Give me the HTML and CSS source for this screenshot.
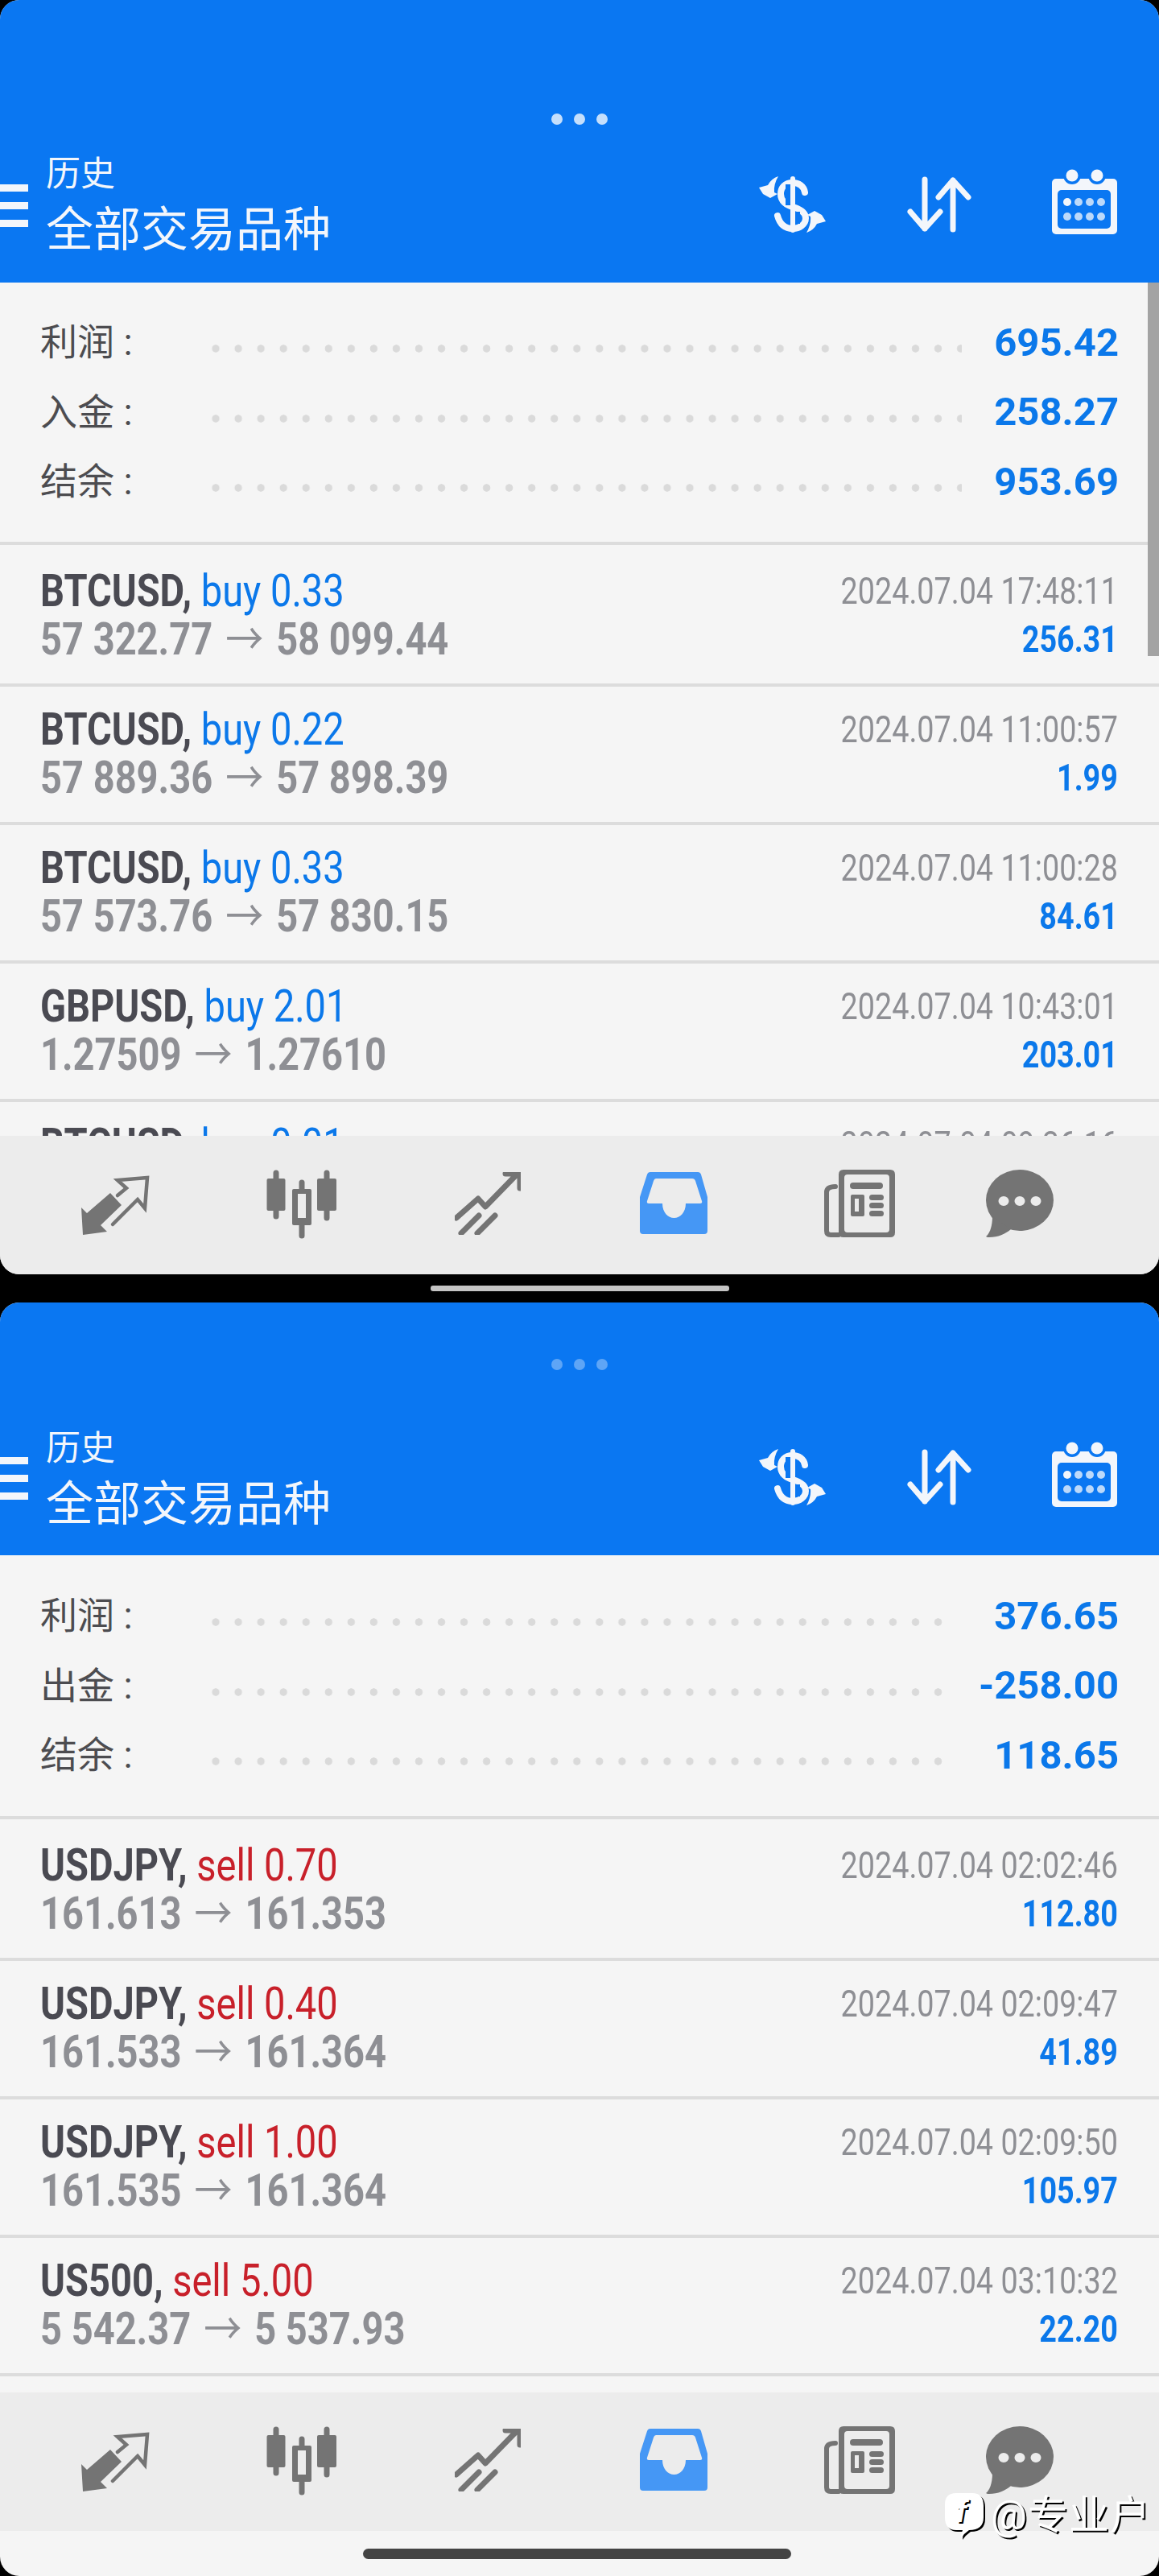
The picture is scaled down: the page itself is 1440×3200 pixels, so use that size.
FILE: index.html
```html
<!DOCTYPE html>
<html lang="zh-CN">
  <head>
    <meta charset="utf-8">
    <meta name="viewport" content="width=device-width">
    <title>历史</title>
    <link rel="stylesheet" href="styles.css">
  </head>

<body>
    <!-- icons used by both panels -->
    <svg class="sprite" aria-hidden="true">
      <symbol id="i-dollar" viewBox="0 0 84 70">
        <path class="w-line fat" d="M57 20C56 12 49 8 42 8 32 8 27 14 27 22 27 31 34 36 42 38 52 41 58 46 58 52 58 60 50 65 42 65 33 65 26 60 23 49"/>
        <rect class="b-fill" x="33" y="10" width="6" height="26"/>
        <rect class="b-fill" x="45" y="44" width="6" height="15"/>
        <rect class="w-fill" x="39" y="0" width="6" height="70" rx="3"/>
        <path class="w-fill" d="M24 0Q15 3 11 11L0 14 5 22 14 27 23 22 19 20Q18 10 24 0Z"/>
        <path class="w-fill" transform="rotate(180 41.5 35)" d="M24 0Q15 3 11 11L0 14 5 22 14 27 23 22 19 20Q18 10 24 0Z"/>
      </symbol>
      <symbol id="i-sort" viewBox="0 0 80 70">
        <path class="w-line" d="M22 4V65M4 44L22 65 41 44M57 5V66M39 26L57 5 76 26"/>
      </symbol>
      <symbol id="i-calendar" viewBox="0 0 81 82">
        <rect class="w-fill" y="12" width="81" height="69" rx="5"/>
        <rect class="b-fill" x="7" y="26" width="66" height="48" rx="5"/>
        <circle class="b-fill" cx="25" cy="8" r="11"/>
        <circle class="b-fill" cx="56" cy="8" r="11"/>
        <circle class="w-fill" cx="25" cy="8" r="7.5"/>
        <circle class="w-fill" cx="56" cy="8" r="7.5"/>
        <circle class="w-fill" cx="19" cy="41" r="5"/>
        <circle class="l-fill" cx="33" cy="41" r="5"/>
        <circle class="l-fill" cx="47" cy="41" r="5"/>
        <circle class="l-fill" cx="61" cy="41" r="5"/>
        <circle class="l-fill" cx="19" cy="59" r="5"/>
        <circle class="l-fill" cx="33" cy="59" r="5"/>
        <circle class="l-fill" cx="47" cy="59" r="5"/>
        <circle class="l-fill" cx="61" cy="59" r="5"/>
      </symbol>
      <symbol id="i-quotes" viewBox="0 0 88 76">
        <path class="g-fill" d="M1 40L8 47 37 22 51 37 25 62 33 70 3 74Z"/>
        <path class="g-line thin" d="M46 25L57 16 46 6 83 3 80 41 71 30 40 61"/>
      </symbol>
      <symbol id="i-candles" viewBox="0 0 87 86">
        <path class="g-line" d="M12 4V58M44 16V82M75 4V60"/>
        <rect class="g-fill" x="0.5" y="11" width="23" height="40" rx="2"/>
        <rect class="g-fill" x="32" y="24" width="24" height="45" rx="2"/>
        <rect class="hole" x="39" y="30" width="10" height="30"/>
        <rect class="g-fill" x="63" y="11" width="24" height="40" rx="2"/>
      </symbol>
      <symbol id="i-trade" viewBox="0 0 82 78">
        <path class="g-line" d="M2 57L29 33 38 43 76 4M63 2H81V20M8 76L30 54M28 76L50 54"/>
      </symbol>
      <symbol id="i-history" viewBox="0 0 84 77">
        <path class="a-fill" fill-rule="evenodd" d="M13 0H72Q75 0 76 3L84 31V73Q84 77 80 77H4Q0 77 0 73V31L9 3Q10 0 13 0ZM20 8Q18 8 17 11L9 36Q8 39 11 39H28C28 50 35 57 42.5 57 50 57 57 50 57 39H75Q78 39 77 36L69 11Q68 8 65 8Z"/>
      </symbol>
      <symbol id="i-news" viewBox="0 0 88 84">
        <path class="g-fill" fill-rule="evenodd" d="M24 0H82Q88 0 88 6V78Q88 84 82 84H24Q18 84 18 78V6Q18 0 24 0ZM29 6Q25 6 25 10V74Q25 78 29 78H77Q81 78 81 74V10Q81 6 77 6Z"/>
        <path class="g-line nar" d="M14 21Q3 21 3 28V76Q3 81 8 81H18"/>
        <rect class="g-fill" x="32" y="16" width="41" height="8" rx="4"/>
        <path class="g-fill" fill-rule="evenodd" d="M35 31H48Q50 31 50 33V56Q50 58 48 58H35Q33 58 33 56V33Q33 31 35 31ZM38 36V52H43V36Z"/>
        <rect class="g-fill" x="56" y="31" width="18" height="7" rx="3.5"/>
        <rect class="g-fill" x="56" y="41" width="18" height="7" rx="3.5"/>
        <rect class="g-fill" x="56" y="51" width="18" height="7" rx="3.5"/>
      </symbol>
      <symbol id="i-chat" viewBox="0 0 84 84">
        <ellipse class="g-fill" cx="42" cy="38" rx="42" ry="38"/>
        <path class="g-fill" d="M8 58C8 72 4 80 0 83 1 84 3 84 4 84 15 84 24 80 31 74Z"/>
        <ellipse class="p-fill" cx="22" cy="39" rx="6.5" ry="6"/>
        <ellipse class="p-fill" cx="42" cy="39" rx="6.5" ry="6"/>
        <ellipse class="p-fill" cx="62" cy="39" rx="6.5" ry="6"/>
      </symbol>
    </svg>

    <!-- Top panel -->
    <section class="panel panel-top">
      <header class="app-header">
        <div class="grip"><span></span><span></span><span></span></div>
        <div class="nav">
          <div class="burger"><span></span><span></span><span></span></div>
          <div class="titles">
            <div class="title-small">历史</div>
            <div class="title-large">全部交易品种</div>
          </div>
          <div class="actions">
            <svg class="ico-dollar"><use href="#i-dollar"/></svg>
            <svg class="ico-sort"><use href="#i-sort"/></svg>
            <svg class="ico-calendar"><use href="#i-calendar"/></svg>
          </div>
        </div>
      </header>

      <div class="scroll-thumb"></div>

      <div class="summary">
        <div class="sum-label">利润 :</div><div class="leader"></div><div class="sum-value">695.42</div>
        <div class="sum-label">入金 :</div><div class="leader"></div><div class="sum-value">258.27</div>
        <div class="sum-label">结余 :</div><div class="leader"></div><div class="sum-value">953.69</div>
      </div>

      <div class="list">
        <div class="row">
          <div class="left">
            <div class="deal"><b>BTCUSD,</b> <span class="buy">buy 0.33</span></div>
            <div class="prices">57 322.77 <i>→</i> 58 099.44</div>
          </div>
          <div class="right">
            <div class="time">2024.07.04 17:48:11</div>
            <div class="profit">256.31</div>
          </div>
        </div>
        <div class="row">
          <div class="left">
            <div class="deal"><b>BTCUSD,</b> <span class="buy">buy 0.22</span></div>
            <div class="prices">57 889.36 <i>→</i> 57 898.39</div>
          </div>
          <div class="right">
            <div class="time">2024.07.04 11:00:57</div>
            <div class="profit">1.99</div>
          </div>
        </div>
        <div class="row">
          <div class="left">
            <div class="deal"><b>BTCUSD,</b> <span class="buy">buy 0.33</span></div>
            <div class="prices">57 573.76 <i>→</i> 57 830.15</div>
          </div>
          <div class="right">
            <div class="time">2024.07.04 11:00:28</div>
            <div class="profit">84.61</div>
          </div>
        </div>
        <div class="row">
          <div class="left">
            <div class="deal"><b>GBPUSD,</b> <span class="buy">buy 2.01</span></div>
            <div class="prices">1.27509 <i>→</i> 1.27610</div>
          </div>
          <div class="right">
            <div class="time">2024.07.04 10:43:01</div>
            <div class="profit">203.01</div>
          </div>
        </div>
        <div class="row">
          <div class="left">
            <div class="deal"><b>BTCUSD,</b> <span class="buy">buy 0.01</span></div>
          </div>
          <div class="right">
            <div class="time">2024.07.04 09:36:16</div>
          </div>
        </div>
      </div>

      <nav class="tabs">
        <svg class="tab-quotes"><use href="#i-quotes"/></svg>
        <svg class="tab-candles"><use href="#i-candles"/></svg>
        <svg class="tab-trade"><use href="#i-trade"/></svg>
        <svg class="tab-history"><use href="#i-history"/></svg>
        <svg class="tab-news"><use href="#i-news"/></svg>
        <svg class="tab-chat"><use href="#i-chat"/></svg>
      </nav>
    </section>

    <div class="divider"><span></span></div>

    <!-- Bottom panel -->
    <section class="panel panel-bottom">
      <header class="app-header">
        <div class="grip"><span></span><span></span><span></span></div>
        <div class="nav">
          <div class="burger"><span></span><span></span><span></span></div>
          <div class="titles">
            <div class="title-small">历史</div>
            <div class="title-large">全部交易品种</div>
          </div>
          <div class="actions">
            <svg class="ico-dollar"><use href="#i-dollar"/></svg>
            <svg class="ico-sort"><use href="#i-sort"/></svg>
            <svg class="ico-calendar"><use href="#i-calendar"/></svg>
          </div>
        </div>
      </header>

      <div class="summary">
        <div class="sum-label">利润 :</div><div class="leader"></div><div class="sum-value">376.65</div>
        <div class="sum-label">出金 :</div><div class="leader"></div><div class="sum-value">-258.00</div>
        <div class="sum-label">结余 :</div><div class="leader"></div><div class="sum-value">118.65</div>
      </div>

      <div class="list">
        <div class="row">
          <div class="left">
            <div class="deal"><b>USDJPY,</b> <span class="sell">sell 0.70</span></div>
            <div class="prices">161.613 <i>→</i> 161.353</div>
          </div>
          <div class="right">
            <div class="time">2024.07.04 02:02:46</div>
            <div class="profit">112.80</div>
          </div>
        </div>
        <div class="row">
          <div class="left">
            <div class="deal"><b>USDJPY,</b> <span class="sell">sell 0.40</span></div>
            <div class="prices">161.533 <i>→</i> 161.364</div>
          </div>
          <div class="right">
            <div class="time">2024.07.04 02:09:47</div>
            <div class="profit">41.89</div>
          </div>
        </div>
        <div class="row">
          <div class="left">
            <div class="deal"><b>USDJPY,</b> <span class="sell">sell 1.00</span></div>
            <div class="prices">161.535 <i>→</i> 161.364</div>
          </div>
          <div class="right">
            <div class="time">2024.07.04 02:09:50</div>
            <div class="profit">105.97</div>
          </div>
        </div>
        <div class="row">
          <div class="left">
            <div class="deal"><b>US500,</b> <span class="sell">sell 5.00</span></div>
            <div class="prices">5 542.37 <i>→</i> 5 537.93</div>
          </div>
          <div class="right">
            <div class="time">2024.07.04 03:10:32</div>
            <div class="profit">22.20</div>
          </div>
        </div>
      </div>

      <nav class="tabs">
        <svg class="tab-quotes"><use href="#i-quotes"/></svg>
        <svg class="tab-candles"><use href="#i-candles"/></svg>
        <svg class="tab-trade"><use href="#i-trade"/></svg>
        <svg class="tab-history"><use href="#i-history"/></svg>
        <svg class="tab-news"><use href="#i-news"/></svg>
        <svg class="tab-chat"><use href="#i-chat"/></svg>
      </nav>

      <div class="home-area"><span></span></div>

      <div class="watermark">
        <div class="wm-badge">
          <svg viewBox="0 0 48 56"><path d="M14 0H34Q48 0 48 16V30Q48 46 30 46 24 50 20 56 20 50 22 46H14Q0 46 0 30V14Q0 0 14 0Z"/></svg>
          <span>f</span>
        </div>
        <div class="wm-text">@专业户</div>
      </div>
    </section>
</body>

</html>
```

FILE: styles.css
```css
html, body {
  margin: 0;
  padding: 0;
}

body {
  width: 1440px;
  height: 3200px;
  overflow: hidden;
  background: #000;
  font-family: Roboto, "Noto Sans CJK SC", sans-serif;
}

.sprite {
  position: absolute;
  width: 0;
  height: 0;
}

/* icon paints */
.w-fill { fill: #f3f6fb; }
.b-fill { fill: #0a77f2; }
.l-fill { fill: #bcd9fa; }
.w-line { fill: none; stroke: #f3f6fb; stroke-width: 7; stroke-linecap: round; stroke-linejoin: round; }
.w-line.fat { stroke-width: 8; }
.g-fill { fill: #747474; }
.g-line { fill: none; stroke: #747474; stroke-width: 7; stroke-linecap: round; stroke-linejoin: round; }
.g-line.thin { stroke-width: 4.5; stroke-linejoin: miter; }
.g-line.nar { stroke-width: 6; }
.a-fill { fill: #4597f5; }
.p-fill, .hole { fill: #ececec; }

.panel {
  position: relative;
  display: flex;
  flex-direction: column;
  overflow: hidden;
  background: #f5f5f5;
  border-radius: 24px;
}

.panel-top {
  height: 1583px;
}

.panel-bottom {
  height: 1582px;
}

.app-header {
  flex: none;
  background: #0a77f2;
  color: #f3f6fb;
}

.panel-top .app-header {
  height: 351px;
  padding-top: 141px;
  box-sizing: border-box;
}

.panel-bottom .app-header {
  height: 314px;
  padding-top: 70px;
  box-sizing: border-box;
}

.grip {
  display: flex;
  justify-content: center;
  gap: 14px;
}

.grip span {
  width: 14px;
  height: 14px;
  border-radius: 50%;
  background: #c5dffc;
}

.panel-bottom .grip span {
  background: #5ea5f6;
}

.nav {
  display: flex;
  align-items: center;
  padding-right: 52px;
}

.panel-top .nav {
  margin-top: 34px;
}

.panel-bottom .nav {
  margin-top: 68px;
}

.burger {
  display: flex;
  flex-direction: column;
  gap: 13px;
  width: 35px;
}

.panel-top .burger {
  margin-top: 1px;
}

.panel-bottom .burger {
  margin-top: -1px;
}

.titles {
  margin-left: 22px;
}

.panel-top .titles {
  padding-top: 2px;
}

.panel-bottom .titles {
  padding-top: 4px;
}

.burger span {
  height: 9px;
  background: #f3f6fb;
}

.title-small {
  font-size: 43px;
  line-height: 50px;
}

.title-large {
  font-size: 59px;
  line-height: 68px;
  margin-top: 11px;
}

.actions {
  display: flex;
  align-items: center;
  gap: 100px;
  margin-left: auto;
}

.panel-top .actions {
  margin-top: -2px;
}

.panel-bottom .actions {
  margin-top: -4px;
}

.ico-dollar { width: 84px; height: 70px; }
.ico-sort { width: 80px; height: 70px; }
.ico-calendar { width: 81px; height: 82px; margin-top: -6px; }

.scroll-thumb {
  position: absolute;
  top: 351px;
  right: 0;
  width: 14px;
  height: 464px;
  background: #a3a3a3;
}

.summary {
  flex: none;
  display: grid;
  grid-template-columns: 204px 1fr auto;
  grid-auto-rows: 86.5px;
  align-items: center;
  padding: 29px 50px 33px 50px;
  border-bottom: 4px solid #dcdcdc;
}

.panel-bottom .summary {
  padding-top: 30px;
  padding-bottom: 34px;
}

.sum-label {
  font-size: 46px;
  color: #4c4c50;
  padding-bottom: 4px;
  white-space: nowrap;
}

.leader {
  height: 10px;
  margin: 20px 40px 0 0;
  background: radial-gradient(circle, #dadada 4.4px, transparent 5px) 0 0 / 28.05px 10px repeat-x;
}

.sum-value {
  font-size: 49px;
  font-weight: 700;
  color: #0b78ea;
  text-align: right;
  padding-top: 4px;
}

.list {
  flex: 1;
  min-height: 0;
  overflow: hidden;
}

.row {
  display: flex;
  justify-content: space-between;
  height: 172px;
  box-sizing: border-box;
  padding: 23px 51px 0 50px;
  border-bottom: 4px solid #dcdcdc;
}

.row:first-child {
  height: 176px;
  padding-top: 27px;
}

/* the app uses a condensed face, Roboto is squeezed to match */
.left, .right {
  line-height: 60px;
  white-space: nowrap;
}

.left {
  transform: scaleX(.855);
  transform-origin: left center;
  font-size: 55px;
}

.right {
  transform: scaleX(.82);
  transform-origin: right center;
  font-size: 46px;
  text-align: right;
}

.deal b {
  color: #4a4a52;
  font-weight: 700;
}

.buy { color: #0b78ea; }
.sell { color: #c8202a; }

.prices {
  color: #8e8f94;
  font-weight: 700;
}

.prices i {
  margin: 0 5px;
  font-style: normal;
  font-weight: 400;
}

.time {
  color: #8e8f94;
}

.profit {
  color: #0b78ea;
  font-weight: 700;
}

.tabs {
  flex: none;
  display: grid;
  grid-template-columns: repeat(5, 231px) 167px;
  justify-items: center;
  align-items: center;
  height: 172px;
  padding-left: 28px;
  background: #ececec;
}

.tab-quotes { width: 88px; height: 76px; margin-top: 1px; }
.tab-candles { width: 87px; height: 86px; margin-top: -2px; }
.tab-trade { width: 82px; height: 78px; margin-top: -4px; }
.tab-history { width: 84px; height: 77px; margin-top: -5px; }
.tab-news { width: 88px; height: 84px; margin-top: -4px; }
.tab-chat { width: 84px; height: 84px; margin-top: -4px; }

.divider {
  display: flex;
  justify-content: center;
  height: 35px;
  padding-top: 14px;
  box-sizing: border-box;
}

.divider span {
  width: 371px;
  height: 7px;
  border-radius: 3px;
  background: #c4c4c4;
}

.home-area {
  flex: none;
  display: flex;
  justify-content: center;
  height: 56px;
  padding: 22px 6px 0 0;
  box-sizing: border-box;
}

.home-area span {
  width: 532px;
  height: 13px;
  border-radius: 7px;
  background: #444;
}

/* sits over the tab bar */
.watermark {
  position: absolute;
  left: 1174px;
  top: 1479px;
  display: flex;
  align-items: flex-start;
  color: #fff;
}

.wm-badge {
  position: relative;
  width: 48px;
  height: 56px;
}

.wm-badge svg {
  display: block;
  width: 48px;
  height: 56px;
  fill: #fff;
  filter: drop-shadow(2px 2px 0 #000);
}

.wm-badge span {
  position: absolute;
  left: 14px;
  top: 0;
  font: italic 700 38px/46px Roboto, sans-serif;
  color: #fff;
  text-shadow: 2px 2px 0 #000;
}

.wm-text {
  margin-left: 9px;
  font-size: 50px;
  line-height: 56px;
  letter-spacing: 1px;
  text-shadow: 2px 2px 0 #000;
}
```
